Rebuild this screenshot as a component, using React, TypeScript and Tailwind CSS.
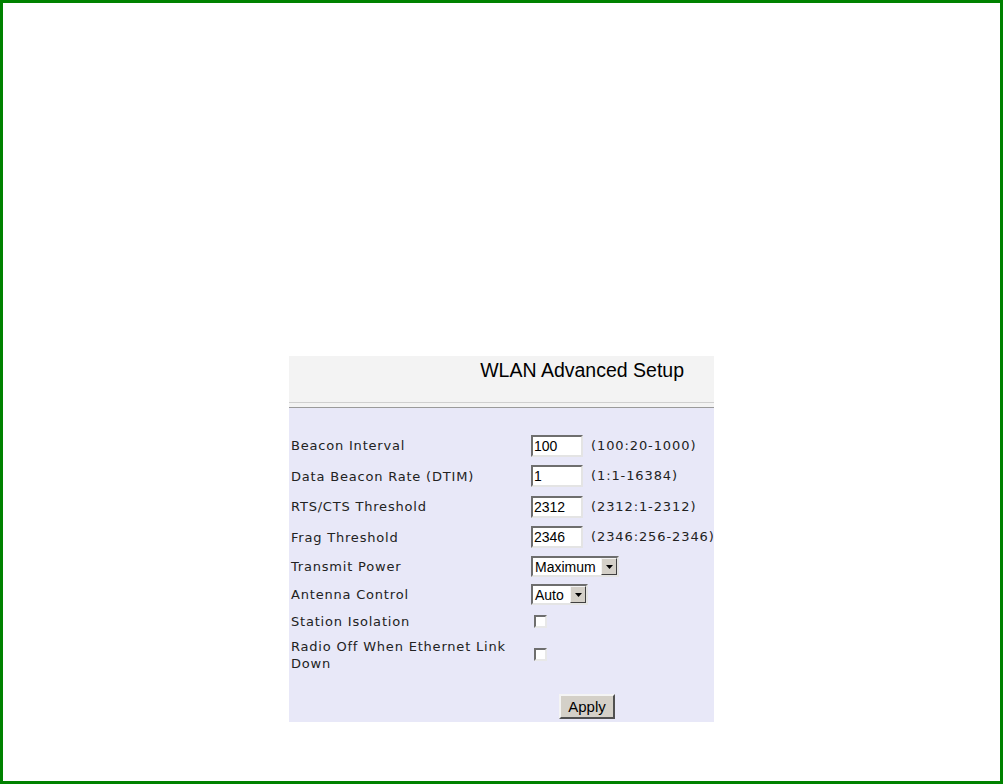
import React from "react";

const labelFont = { fontFamily: '"DejaVu Sans", Verdana, sans-serif' };
const arial = { fontFamily: '"Liberation Sans", Arial, sans-serif' };

function TextBox({ value }: { value: string }) {
  return (
    <div
      className="w-[52px] h-[22px] bg-white border-2 border-t-[#6e6e6e] border-l-[#6e6e6e] border-r-[#e4e4e4] border-b-[#e4e4e4] flex items-center pl-[1px] text-[14px] text-black leading-none"
      style={arial}
    >
      {value}
    </div>
  );
}

function Select({ value, width }: { value: string; width: string }) {
  return (
    <div
      className={`${width} h-[21px] bg-white border-2 border-t-[#6e6e6e] border-l-[#6e6e6e] border-r-[#e4e4e4] border-b-[#e4e4e4] flex items-center justify-between text-[14px] text-black leading-none`}
      style={arial}
    >
      <span className="pl-[2px]">{value}</span>
      <div className="w-[16px] h-[17px] bg-[#d4d0c8] border border-t-[#f4f4f4] border-l-[#f4f4f4] border-r-[#404040] border-b-[#404040] flex items-center justify-center">
        <svg width="7" height="4" viewBox="0 0 7 4">
          <path d="M0 0 H7 L3.5 4 Z" fill="#000" />
        </svg>
      </div>
    </div>
  );
}

function Check() {
  return (
    <div className="w-[13px] h-[13px] bg-white border-2 border-t-[#6e6e6e] border-l-[#6e6e6e] border-r-[#e8e8e8] border-b-[#e8e8e8] ml-[3px]" />
  );
}

function Hint({ children }: { children: React.ReactNode }) {
  return (
    <span
      className="ml-[8px] whitespace-nowrap text-[13px] tracking-[0.9px] text-[#222]"
      style={labelFont}
    >
      {children}
    </span>
  );
}

function Row({
  label,
  h,
  children,
}: {
  label: React.ReactNode;
  h: string;
  children: React.ReactNode;
}) {
  return (
    <div className={`flex items-center ${h}`}>
      <div
        className="w-[242px] shrink-0 pl-[2px] pr-[10px] text-[13px] tracking-[0.8px] leading-[17px] text-[#222]"
        style={labelFont}
      >
        {label}
      </div>
      <div className="flex items-center">{children}</div>
    </div>
  );
}

export default function App() {
  return (
    <div className="w-[1003px] h-[784px] border-[3px] border-[#008200] bg-white pl-[286px] pt-[353px]">
      <div className="w-[425px] h-[366px] bg-[#e8e8f8] flex flex-col">
        <div className="h-[52px] bg-[#f3f3f3] flex flex-col">
          <div className="h-[46px] flex justify-end pr-[30px] pt-[3px]">
            <span className="text-[19.5px] leading-[23px] text-black" style={arial}>
              WLAN Advanced Setup
            </span>
          </div>
          <div className="h-[1px] bg-[#cfcfcf]" />
          <div className="h-[4px]" />
          <div className="h-[1px] bg-[#9a9a9a]" />
        </div>
        <div className="pt-[22px] flex flex-col">
          <Row label="Beacon Interval" h="h-[31px]">
            <TextBox value="100" />
            <Hint>(100:20-1000)</Hint>
          </Row>
          <Row label="Data Beacon Rate (DTIM)" h="h-[30px]">
            <TextBox value="1" />
            <Hint>(1:1-16384)</Hint>
          </Row>
          <Row label="RTS/CTS Threshold" h="h-[31px]">
            <TextBox value="2312" />
            <Hint>(2312:1-2312)</Hint>
          </Row>
          <Row label="Frag Threshold" h="h-[30px]">
            <TextBox value="2346" />
            <Hint>(2346:256-2346)</Hint>
          </Row>
          <Row label="Transmit Power" h="h-[29px]">
            <Select value="Maximum" width="w-[88px]" />
          </Row>
          <Row label="Antenna Control" h="h-[27px]">
            <Select value="Auto" width="w-[57px]" />
          </Row>
          <Row label="Station Isolation" h="h-[26px]">
            <Check />
          </Row>
          <Row label="Radio Off When Ethernet Link Down" h="h-[41px]">
            <Check />
          </Row>
          <div className="flex pl-[270px] pt-[19px]">
            <div
              className="w-[56px] h-[25px] bg-[#d4d0c8] border-2 border-t-[#f4f4f4] border-l-[#f4f4f4] border-r-[#505050] border-b-[#505050] flex items-center justify-center text-[15px] text-black leading-none"
              style={arial}
            >
              Apply
            </div>
          </div>
        </div>
      </div>
    </div>
  );
}
